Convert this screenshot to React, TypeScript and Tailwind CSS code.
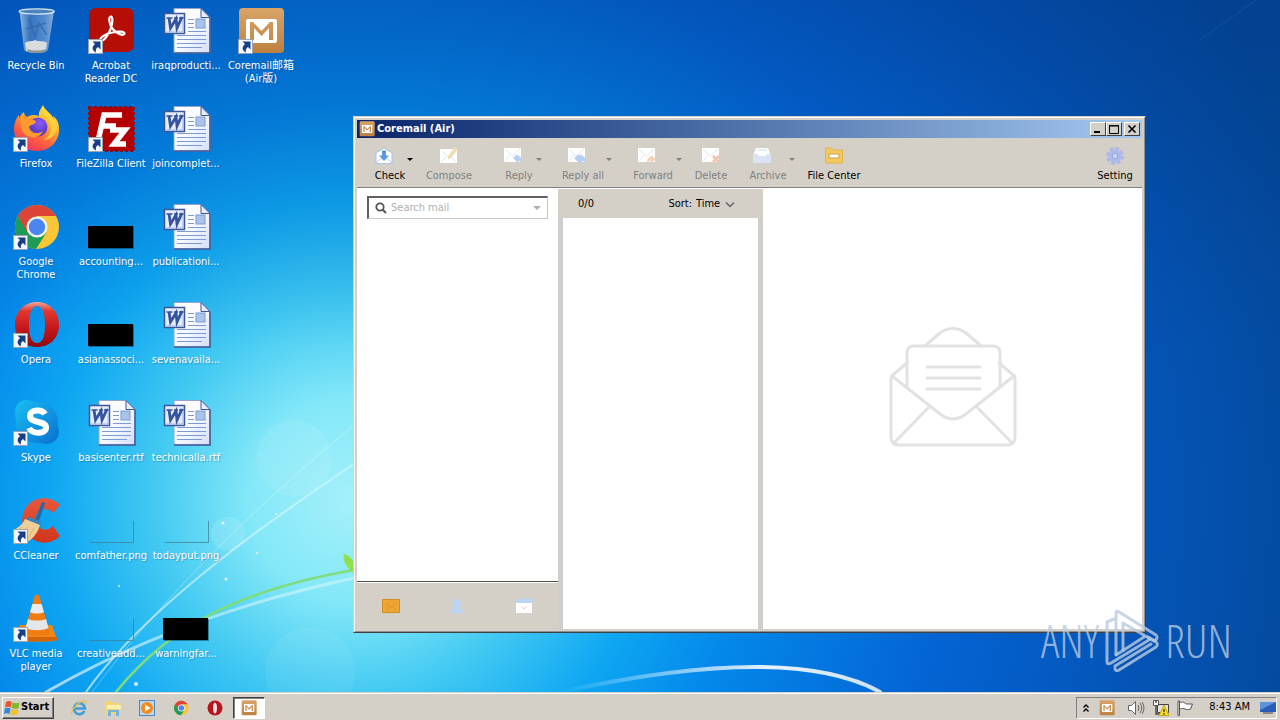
import React from 'react';

type IconType = React.FC<{ className?: string }>;

interface DesktopItem {
  label: string;
  icon: IconType;
  shortcut?: boolean;
}

interface ToolItem {
  label: string;
  icon: IconType;
  width: string;
  row?: string;
  menu?: boolean;
  active?: boolean;
}

/* ---------- Desktop icons (48 x 48) ---------- */

const RecycleBin: IconType = () => (
  <svg viewBox="0 0 48 48" className="size-12">
    <defs>
      <linearGradient id="bin" x1="0" x2="1">
        <stop offset="0" stopColor="#a9c6e6" />
        <stop offset=".3" stopColor="#3f78bd" />
        <stop offset=".7" stopColor="#5b92d2" />
        <stop offset="1" stopColor="#9cb9dc" />
      </linearGradient>
    </defs>
    <path d="M7.500 4 12 43c1 3 22 3 24 0l6-39z" fill="url(#bin)" opacity=".85" />
    <path d="M13 36c4-3 7-1 10-3 3 2 8 0 12 3l-1 8c-6 2.500-16 2.500-20 0z" fill="#d9dcdd" />
    <path d="M15 42c5 2 14 2 19 0v3c-5 1.500-14 1.500-18 0z" fill="#8d9296" />
    <path d="M17 12l6 18 4-14 8 12M14 22l20-6" stroke="#2c5f9f" strokeWidth="1.500" fill="none" opacity=".6" />
    <ellipse cx="24.700" cy="4.500" rx="17.500" ry="2.600" fill="#4d83bd" stroke="#d7e6f3" strokeWidth="1.400" />
  </svg>
);

const Acrobat: IconType = () => (
  <svg viewBox="0 0 48 48" className="size-12">
    <rect x="2" y="1" width="45" height="44" rx="7" fill="#b50f05" />
    <path
      d="M14 33.500c-3-2 4-6.500 11-8 7-1.700 13-1 12.500 1.200-1 2.500-7.500.300-12-5-3-4-4.500-11-2-12 2.500-.5 2.500 6 0 12.500-2.500 6-6.500 12-9.500 11.300z"
      fill="none"
      stroke="#fff"
      strokeWidth="2.200"
    />
  </svg>
);

const Firefox: IconType = () => (
  <svg viewBox="0 0 48 48" className="size-12">
    <defs>
      <linearGradient id="fox" x1=".85" y1="0" x2=".3" y2="1">
        <stop offset="0" stopColor="#fff04a" />
        <stop offset=".35" stopColor="#ffb92c" />
        <stop offset=".65" stopColor="#ff6a3a" />
        <stop offset="1" stopColor="#f2315f" />
      </linearGradient>
      <radialGradient id="foxGlobe" cx=".6" cy=".3">
        <stop offset="0" stopColor="#9059ff" />
        <stop offset="1" stopColor="#5b3fc4" />
      </radialGradient>
    </defs>
    <path
      d="M31 0c-2 4-5 7-4 11-5-2-9-1-12 1-2-1-3-3-3-5-3 2-4 4-4 6-1-1-1-2-1-3-4 5-5 10-5 14C2 37 12 46 25 46s23-10 22-23c0-6-3-10-6-12l1 4C40 8 33 6 31 0z"
      fill="url(#fox)"
    />
    <circle cx="26" cy="22" r="9.500" fill="url(#foxGlobe)" />
    <path d="M8 11c6-1 10 3 16 5 0 4-5 3-7 6 1 6 9 8 14 4-3 8-17 9-21-1-2-5-1-8-2-14z" fill="#ff9a30" />
    <path d="M30 4c1 6 10 10 9 19 0 7-4 10-8 12 8 0 14-6 14-14C44 13 36 9 30 4z" fill="#ffd43e" opacity=".8" />
  </svg>
);

const FileZilla: IconType = () => (
  <svg viewBox="0 0 48 48" className="size-12">
    <rect x="2" y="2" width="45" height="44" fill="#b30000" stroke="#8a0f18" strokeWidth="2" strokeDasharray="3 2" />
    <g fill="none" stroke="#fff" strokeWidth="5.500">
      <path d="M35 10H17L11 36M15 21h14" />
      <path d="M23 25h15L27 39h12" />
    </g>
  </svg>
);

const Chrome: IconType = ({ className = 'size-12' }) => (
  <svg viewBox="0 0 48 48" className={className}>
    <circle cx="25" cy="24" r="22" fill="#fbc634" />
    <path d="M25 13h19a22 22 0 0 0-38.100 0L15 30z" fill="#db4437" />
    <path d="M5.900 13A22 22 0 0 0 24 46l10.500-16.500L25 34l-9.500-4.500z" fill="#1e9c57" />
    <circle cx="25" cy="24" r="10.500" fill="#f4f4f4" />
    <circle cx="25" cy="24" r="8.200" fill="#4a86ee" />
  </svg>
);

const Opera: IconType = () => (
  <svg viewBox="0 0 48 48" className="size-12">
    <defs>
      <linearGradient id="opera" x1="0" x2="0" y1="0" y2="1">
        <stop offset="0" stopColor="#f2a59a" />
        <stop offset=".2" stopColor="#e2362f" />
        <stop offset=".6" stopColor="#c4171b" />
        <stop offset="1" stopColor="#8c0b10" />
      </linearGradient>
    </defs>
    <path
      fillRule="evenodd"
      d="M25 1C12 1 3 11 3 24s9 22 22 22 22-9 22-22S38 1 25 1zm0 4c6 0 8 9 8 19s-2 18-8 18-8-8-8-18 2-19 8-19z"
      fill="url(#opera)"
    />
  </svg>
);

const OperaSmall: IconType = () => (
  <svg viewBox="0 0 16 16" className="size-4">
    <circle cx="8" cy="8" r="7.500" fill="#b8151c" />
    <ellipse cx="8" cy="8" rx="2" ry="5.500" fill="#f6e4e4" />
  </svg>
);

const Skype: IconType = () => (
  <svg viewBox="0 0 48 48" className="size-12">
    <defs>
      <linearGradient id="skype" x1="0" y1="0" x2="1" y2="1">
        <stop offset="0" stopColor="#17c0f2" />
        <stop offset="1" stopColor="#0a6fd0" />
      </linearGradient>
    </defs>
    <path d="M14 1c5 0 6 2 11 2 13 0 21 9 21 21 0 4 1 6 1 9 0 8-7 12-13 12-3 0-5-1-8-1C12 44 4 35 4 24c0-4-1-5-1-10C3 6 8 1 14 1z" fill="url(#skype)" />
    <path d="M33 15c-3-5-15-5-15 2 0 8 16 4 16 11.500 0 7.500-14 6.500-17 .5" fill="none" stroke="#fff" strokeWidth="6" />
  </svg>
);

const CCleaner: IconType = () => (
  <svg viewBox="0 0 48 48" className="size-12">
    <defs>
      <linearGradient id="ccl" x1="0" y1="0" x2="0" y2="1">
        <stop offset="0" stopColor="#e8583a" />
        <stop offset="1" stopColor="#d0351d" />
      </linearGradient>
    </defs>
    <path d="M48 8C40-1 24-1 16 8c-9 10-7 26 3 33 9 7 21 6 29-2l-7-10c-5 5-12 5-16-1-3-5-2-11 3-14 5-3 10-2 13 2z" fill="url(#ccl)" />
    <path d="M30 5l3 1-6 18-4-1z" fill="#1f6cac" />
    <path d="M16 20l13 4-1 6-15-6z" fill="#3384bd" />
    <path d="M13 22l15 6c-2 7-7 14-13 17C9 43 4 38 1 33c5-2 10-6 12-11z" fill="#f0cf96" />
    <path d="M10 30l-5 5M16 30l-6 10M22 31l-7 12" stroke="#dcb478" strokeWidth="1" />
  </svg>
);

const Vlc: IconType = () => (
  <svg viewBox="0 0 48 48" className="size-12">
    <path d="M8 30h32l5 15c0 2-40 2-41 0z" fill="#f08713" />
    <path d="M5 42h40v3c-4 2-36 2-40 0z" fill="#d2650a" />
    <path d="M23 0h4l11 38c-5 4-21 4-26 0z" fill="#f07c12" />
    <path d="M20.500 9h9l2.500 8c-4 2-10 2-14 0z" fill="#e9ecef" />
    <path d="M16 24c5 2 13 2 18 0l2.500 9c-6 3-17 3-23 0z" fill="#e3e7ea" />
  </svg>
);

const WordDoc: IconType = () => (
  <svg viewBox="0 0 48 48" className="size-12 overflow-visible">
    <defs>
      <linearGradient id="page" x1="0" y1="0" x2="1" y2="1">
        <stop offset="0" stopColor="#ffffff" />
        <stop offset=".5" stopColor="#f8faff" />
        <stop offset="1" stopColor="#d3def8" />
      </linearGradient>
    </defs>
    <path d="M12 1.500h27l9 9V46H12z" fill="url(#page)" stroke="#8fa3d4" />
    <path d="M48 11v35H12" fill="none" stroke="#3f5795" strokeWidth="1.500" />
    <path d="M39 1.500v9h9z" fill="#e6edfc" stroke="#3f5795" />
    <path d="M26 12.500h6M26 16.500h6M26 20.500h6M26 24.500h18M15 28.500h29M15 32.500h29M15 36.500h29M15 40.500h25" stroke="#7c9ad4" />
    <rect x="34" y="12" width="9" height="9" fill="#aac3ea" stroke="#7d9bd2" />
    <rect x="2.500" y="6.500" width="20" height="20" fill="#e6eefb" stroke="#3c569b" strokeWidth="1.500" />
    <path d="M4 25h17V9" fill="none" stroke="#9fb5e0" />
    <path d="M7 11l1.500 10L14 12l1 9 5-11" fill="none" stroke="#35539f" strokeWidth="2.800" />
    <path d="M4.500 11h6M12 11h4M17 11h4.500" stroke="#35539f" strokeWidth="1.500" />
  </svg>
);

const BlackThumb: IconType = () => (
  <svg viewBox="0 0 48 48" className="size-12">
    <rect x="2" y="24" width="45" height="22" fill="#000" opacity=".35" />
    <rect x="1" y="23" width="45" height="22" fill="#000" />
  </svg>
);

const ClearThumb: IconType = () => (
  <svg viewBox="0 0 48 48" className="size-12">
    <path d="M3 45.500h43.500V24" fill="none" stroke="#3f7f93" opacity=".75" />
  </svg>
);

const Coremail: IconType = ({ className = 'size-12' }) => (
  <svg viewBox="0 0 48 48" className={className}>
    <defs>
      <linearGradient id="cm" x1="0" y1="0" x2="0" y2="1">
        <stop offset="0" stopColor="#d9a468" />
        <stop offset="1" stopColor="#bd8140" />
      </linearGradient>
    </defs>
    <rect x="2" y="1" width="45" height="45" rx="4" fill="url(#cm)" />
    <path fillRule="evenodd" d="M11 12h27q2 0 2 2v20q0 2-2 2H11q-2 0-2-2V14q0-2 2-2zm2 21h4V21l7.500 8 7.500-8v12h4V15h-3l-8.500 9-8.500-9h-3z" fill="#fff" />
  </svg>
);

const ShortcutArrow = () => (
  <svg viewBox="0 0 15 15" className="absolute bottom-px left-px size-[15px]">
    <rect x=".5" y=".5" width="14" height="14" fill="#f6f8fb" stroke="#9aa4ae" />
    <path d="M4.500 2.500h8v8L10 8C8 9.300 7.500 11 8 13.500 4 11.500 3.500 8 7 5z" fill="#163f86" />
  </svg>
);

/* ---------- Toolbar icons (18 x 18) ---------- */

const Check: IconType = () => (
  <svg viewBox="0 0 18 18" className="size-[18px]">
    <path d="M1 6l8-5 8 5v10.500H1z" fill="#fff" stroke="#a9c4ea" />
    <path d="M1 16l6-5M17 16l-6-5" stroke="#b5cdec" />
    <path d="M7 3.500h4v5h3l-5 5.500-5-5.500h3z" fill="#5f97de" />
  </svg>
);

const Compose: IconType = () => (
  <svg viewBox="0 0 18 18" className="size-[18px]">
    <path d="M0 2h17v14H0z" fill="#fff" />
    <path d="M2 4l6 6 5-4M1 15l5-5M16 15l-4-5" fill="none" stroke="#dfe4e8" />
    <path d="M8 9l7-9 3 2-7 9-3 1z" fill="#f0dcb0" />
  </svg>
);

const MailBase: React.FC<{ children: React.ReactNode }> = ({ children }) => (
  <svg viewBox="0 0 18 18" className="size-[18px]">
    <path d="M0 1h17v14H0z" fill="#fff" />
    <path d="M1 2l7.500 7L16 2M1 14l5-6M16 14l-5-6" fill="none" stroke="#e0e6ee" />
    {children}
  </svg>
);

const Reply: IconType = () => (
  <MailBase>
    <path d="M9 11l5-4v2c3 0 4 3 4 8-1-2-2-3-4-3v2z" fill="#b5cff2" />
  </MailBase>
);

const ReplyAll: IconType = () => (
  <MailBase>
    <path d="M6 11l5-4v2l3-2v2c3 0 4 3 4 8-1-2-2-3-4-3v3l-3-2v1z" fill="#b5cff2" />
  </MailBase>
);

const Forward: IconType = () => (
  <MailBase>
    <path d="M18 12l-5-4v2c-3 0-4 2-4 6 1-1 2-2 4-2v2z" fill="#f5d3b0" />
  </MailBase>
);

const Delete: IconType = () => (
  <MailBase>
    <path d="M11 9l6 6M17 9l-6 6" stroke="#f3c2ae" strokeWidth="2.500" />
  </MailBase>
);

const Archive: IconType = () => (
  <svg viewBox="0 0 18 18" className="size-[18px]">
    <path d="M3 1h12l3 7v8H0V8z" fill="#dbe2f3" />
    <path d="M3 1h12l2 6h-4v2H5V7H1z" fill="#fff" />
    <path d="M4 3h10" stroke="#cdd8ef" />
  </svg>
);

const FileCenter: IconType = () => (
  <svg viewBox="0 0 18 18" className="size-[18px]">
    <path d="M.5 1h6l2 2h9v13H.5z" fill="#f1cb62" stroke="#e3b444" />
    <rect x="4" y="7" width="10" height="4" fill="#fff" stroke="#d99e36" />
  </svg>
);

const Setting: IconType = () => (
  <svg viewBox="0 0 18 18" className="size-[18px]">
    <circle cx="9" cy="9" r="6.500" fill="#aebbea" />
    <circle cx="9" cy="9" r="7.500" fill="none" stroke="#aab8ea" strokeWidth="3" strokeDasharray="3.900 2" />
    <circle cx="9" cy="9" r="2.800" fill="#c9d3f0" stroke="#8ea5e2" />
  </svg>
);

const SmallArrow = () => (
  <svg viewBox="0 0 6 3" className="mb-1 h-[3px] w-1.5 self-end">
    <path d="M0 0h6L3 3z" fill="currentColor" />
  </svg>
);

const desktopItems: DesktopItem[] = [
  { label: 'Recycle Bin', icon: RecycleBin },
  { label: 'Firefox', icon: Firefox, shortcut: true },
  { label: 'Google Chrome', icon: Chrome, shortcut: true },
  { label: 'Opera', icon: Opera, shortcut: true },
  { label: 'Skype', icon: Skype, shortcut: true },
  { label: 'CCleaner', icon: CCleaner, shortcut: true },
  { label: 'VLC media player', icon: Vlc, shortcut: true },
  { label: 'Acrobat Reader DC', icon: Acrobat, shortcut: true },
  { label: 'FileZilla Client', icon: FileZilla, shortcut: true },
  { label: 'accounting...', icon: BlackThumb },
  { label: 'asianassoci...', icon: BlackThumb },
  { label: 'basisenter.rtf', icon: WordDoc },
  { label: 'comfather.png', icon: ClearThumb },
  { label: 'creativeadd...', icon: ClearThumb },
  { label: 'iraqproducti...', icon: WordDoc },
  { label: 'joincomplet...', icon: WordDoc },
  { label: 'publicationi...', icon: WordDoc },
  { label: 'sevenavaila...', icon: WordDoc },
  { label: 'technicalla.rtf', icon: WordDoc },
  { label: 'todayput.png', icon: ClearThumb },
  { label: 'warningfar...', icon: BlackThumb },
  { label: 'Coremail邮箱 (Air版)', icon: Coremail, shortcut: true }
];

const tools: ToolItem[] = [
  { label: 'Check', icon: Check, width: 'w-[46px]', row: 'w-[46px] pl-2', menu: true, active: true },
  { label: 'Compose', icon: Compose, width: 'w-12 mr-[11px]' },
  { label: 'Reply', icon: Reply, width: 'w-[46px]', row: 'w-[46px] pl-2', menu: true },
  { label: 'Reply all', icon: ReplyAll, width: 'w-[58px]', row: 'w-[58px] pl-3.5', menu: true },
  { label: 'Forward', icon: Forward, width: 'w-[58px]', row: 'w-[58px] pl-3.5', menu: true },
  { label: 'Delete', icon: Delete, width: 'w-[34px]' },
  { label: 'Archive', icon: Archive, width: 'w-14', row: 'w-[54px] pl-3', menu: true },
  { label: 'File Center', icon: FileCenter, width: 'w-[52px]', active: true }
];

const Wallpaper = () => (
  <svg viewBox="0 0 1280 692" preserveAspectRatio="none" className="absolute inset-0 size-full" aria-hidden="true">
    <defs>
      <radialGradient id="glow" gradientUnits="userSpaceOnUse" cx="350" cy="500" r="1000">
        <stop offset="0" stopColor="#a4f0fa" />
        <stop offset=".1" stopColor="#84e8f8" />
        <stop offset=".2" stopColor="#40c8f2" />
        <stop offset=".3" stopColor="#0ea6f2" />
        <stop offset=".4" stopColor="#0488ea" />
        <stop offset=".6" stopColor="#0464d4" />
        <stop offset=".8" stopColor="#0454b6" />
        <stop offset="1" stopColor="#044898" />
      </radialGradient>
      <linearGradient id="shade" x1="0" x2="0" y1="0" y2="1">
        <stop offset="0" stopColor="#003080" stopOpacity=".3" />
        <stop offset=".5" stopColor="#003a80" stopOpacity="0" />
      </linearGradient>
      <linearGradient id="beam" x1="0" x2="1" y1="1" y2="0">
        <stop offset="0" stopColor="#fff" stopOpacity=".9" />
        <stop offset="1" stopColor="#fff" stopOpacity=".5" />
      </linearGradient>
      <linearGradient id="arc" x1="0" x2="1">
        <stop offset="0" stopColor="#fff" stopOpacity="0" />
        <stop offset=".65" stopColor="#fff" stopOpacity=".9" />
        <stop offset="1" stopColor="#fff" stopOpacity=".8" />
      </linearGradient>
    </defs>
    <rect width="1280" height="692" fill="url(#glow)" />
    <rect width="1280" height="692" fill="url(#shade)" />
    <circle cx="294" cy="458" r="38" fill="#fff" opacity=".08" />
    <circle cx="228" cy="534" r="17" fill="#fff" opacity=".12" />
    <circle cx="310" cy="672" r="45" fill="#fff" opacity=".06" />
    <g fill="none" strokeLinecap="round">
      <path d="M46 692Q180 615 354 578" stroke="url(#beam)" strokeWidth="3" opacity=".7" />
      <path d="M86 692C130 630 210 560 354 464" stroke="url(#beam)" strokeWidth="2" opacity=".7" />
      <path d="M92 692Q190 560 354 425" stroke="#fff" strokeWidth="1" opacity=".3" />
      <path d="M116 692C170 625 240 590 354 570" stroke="#7fdc7c" strokeWidth="2.500" />
      <path d="M354 574c-6-6-12-12-10-20 6 2 9 6 10 10z" fill="#8fe04c" />
      <path d="M560 692Q790 642 880 692" stroke="url(#arc)" strokeWidth="4" />
      <path d="M1200 40L1256 0" stroke="#4d8fd0" strokeWidth="1" opacity=".2" />
    </g>
    <g fill="#fff" opacity=".8">
      <circle cx="223" cy="523" r="1.500" />
      <circle cx="276" cy="514" r="1" />
      <circle cx="226" cy="579" r="1.500" />
      <circle cx="136" cy="684" r="2" />
      <circle cx="257" cy="553" r="1" />
      <circle cx="119" cy="586" r="1" />
    </g>
  </svg>
);

const winButton =
  'flex h-3.5 w-4 items-center justify-center border border-t-white border-l-white border-r-[#404040] border-b-[#404040] bg-[#d4d0c8]';

const ToolButton: React.FC<{ item: ToolItem }> = ({ item }) => {
  const Icon = item.icon;
  return (
    <button
      type="button"
      className={`flex flex-col items-center whitespace-nowrap ${item.width} ${item.active ? 'text-black' : 'text-[#808080]'}`}
    >
      <span className={item.row ? `flex justify-between ${item.row}` : 'flex'}>
        <Icon />
        {item.menu && <SmallArrow />}
      </span>
      <span className="mt-1 leading-[13px]">{item.label}</span>
    </button>
  );
};

const MailWindow = () => (
  <section className="absolute top-[116px] right-[134px] bottom-[59px] left-[353px] flex flex-col border border-[#d4d0c8] border-r-[#404040] border-b-[#404040] bg-[#d4d0c8] text-[11px]">
    <div className="flex min-h-0 grow flex-col border border-t-white border-r-[#909090] border-b-[#909090] border-l-white p-0.5">
      <header className="flex h-[18px] shrink-0 items-center bg-linear-to-r from-[#0a246a] to-[#a6caf0] px-0.5">
        <Coremail className="size-4" />
        <h1 className="ml-0.5 grow text-[11px] font-bold text-white">Coremail (Air)</h1>
        <button type="button" aria-label="Minimize" className={winButton}>
          <svg viewBox="0 0 12 10" className="h-2.5 w-3"><path d="M2 7h6v2H2z" /></svg>
        </button>
        <button type="button" aria-label="Maximize" className={winButton}>
          <svg viewBox="0 0 12 10" className="h-2.5 w-3"><path d="M1.500 1.500h9v8h-9zM1 2h10" fill="none" stroke="#000" /></svg>
        </button>
        <button type="button" aria-label="Close" className={`ml-0.5 ${winButton}`}>
          <svg viewBox="0 0 12 10" className="h-2.5 w-3"><path d="M2.500 1.500l7 7M9.500 1.500l-7 7" stroke="#000" strokeWidth="1.600" /></svg>
        </button>
      </header>

      {/* Toolbar */}
      <div className="flex shrink-0 items-start gap-3 border-b border-[#808080] pt-[9px] pr-2 pb-[5px] pl-2.5">
        {tools.map((item) => (
          <ToolButton key={item.label} item={item} />
        ))}
        <div className="grow" />
        <ToolButton item={{ label: 'Setting', icon: Setting, width: 'w-[38px]', active: true }} />
      </div>

      <div className="flex min-h-0 grow border-t border-white">
        {/* Folders */}
        <aside className="flex w-[201px] shrink-0 flex-col bg-white">
          <div className="grow px-2.5 pt-[7px]">
            <div className="flex h-[23px] items-center border border-t-2 border-l-2 border-[#c8c8c8] border-t-[#606060] border-l-[#606060] px-1.5">
              <svg viewBox="0 0 12 12" className="size-3 shrink-0">
                <circle cx="5" cy="5" r="3.700" fill="none" stroke="#555" strokeWidth="1.800" />
                <path d="M7.500 7.500l3.500 3.500" stroke="#555" strokeWidth="2" />
              </svg>
              <input
                type="text"
                aria-label="Search mail"
                placeholder="Search mail"
                className="ml-1 min-w-0 grow bg-transparent outline-none placeholder:text-[#b0b0b0]"
              />
              <button type="button" aria-label="Search options">
                <svg viewBox="0 0 8 4" className="h-1 w-2"><path d="M0 0h8L4 4z" fill="#b0b0b0" /></svg>
              </button>
            </div>
          </div>
          <nav className="flex h-12 shrink-0 items-center justify-around border-t border-[#505050] bg-[#d4d0c8] shadow-[inset_0_1px_0_#fff]">
            <button type="button" aria-label="Mail">
              <svg viewBox="0 0 18 14" className="h-3.5 w-[18px]">
                <path d="M.5.5h17v13H.5z" fill="#eda634" stroke="#d28e22" />
                <path d="M4 4l5 4 5-4M4 11l3-3M14 11l-3-3" fill="none" stroke="#d8952a" />
              </svg>
            </button>
            <button type="button" aria-label="Contacts">
              <svg viewBox="0 0 16 16" className="size-4">
                <path d="M8 1c3 0 4 2 4 4.500 0 2-1 4-2 5 3 0 5 2 5 4.500H1c0-2.500 2-4.500 5-4.500-1-1-2-3-2-5C4 3 5 1 8 1z" fill="#bcd5f5" />
              </svg>
            </button>
            <button type="button" aria-label="Calendar">
              <svg viewBox="0 0 18 14" className="h-3.5 w-[18px]">
                <path d="M1 3h16v11H1z" fill="#fff" />
                <path d="M0 0h18v4H0z" fill="#bcd5f5" />
                <path d="M7 8l2 2 3-3" fill="none" stroke="#e6cfc8" />
              </svg>
            </button>
          </nav>
        </aside>

        {/* Message list */}
        <div className="flex w-[205px] shrink-0 flex-col bg-[#d0ceca]">
          <div className="flex h-[29px] items-center bg-[#d4d0c8] pt-0.5 pr-7 pl-5">
            <span className="grow">0/0</span>
            <label className="flex items-center gap-1">
              Sort:
              <select className="appearance-none bg-transparent outline-none" defaultValue="Time">
                <option>Time</option>
              </select>
              <svg viewBox="0 0 10 6" className="h-1.5 w-2.5">
                <path d="M1 .5l4 4 4-4" fill="none" stroke="#666" strokeWidth="1.500" />
              </svg>
            </label>
          </div>
          <div className="mx-[5px] grow bg-white" />
        </div>

        {/* Preview */}
        <main className="flex grow items-center justify-center bg-white">
          <svg viewBox="0 0 128 120" className="mb-11 h-[120px] w-32" fill="none" stroke="#e2e2e2" strokeWidth="3" strokeLinejoin="round" strokeLinecap="round">
            <path d="M37 18L51 6q13-9 26 0l14 12" />
            <path d="M18 60V26q0-7 7-7h79q7 0 7 7v34" />
            <path d="M18 36L5 47q-3 2-3 5v58q0 8 8 8h108q8 0 8-8V52q0-3-3-5l-13-11" />
            <path d="M3 49l48 38q13 10 26 0l48-38M40 80L6 115M88 80l34 35" />
            <path d="M38 40h53M38 51h53M38 62h53" />
          </svg>
        </main>
      </div>
    </div>
  </section>
);

const Watermark = () => (
  <div className="pointer-events-none absolute right-12 bottom-5 flex items-center font-['Open_Sans_Condensed_Light','Open_Sans_Condensed','Noto_Sans_ExtraCondensed','Roboto_Condensed','Liberation_Sans',sans-serif] text-[46px] leading-[64px] text-[#b9cbe0]/80">
    <span>ANY</span>
    <svg viewBox="0 0 58 64" className="mx-1 h-16 w-[58px]" fill="none" stroke="currentColor" strokeWidth="3" strokeLinejoin="round" strokeLinecap="round">
      <path d="M11 11l-7 3v40q0 3 4 1l38-23" />
      <path d="M13 46V5q0-3 3-1l37 23q3 3-2 6L20 15v27" />
      <path d="M13 47l28-18M12 60q0 4 4 2l37-23q3-3-1-6l-7-4M12 58l36-22" />
    </svg>
    <span>RUN</span>
  </div>
);

const Taskbar = () => (
  <footer className="flex h-7 shrink-0 items-center border-t border-[#d4d0c8] bg-[#d4d0c8] pr-[3px] pl-0.5 text-[11px] shadow-[inset_0_1px_0_#fff]">
    <button
      type="button"
      className="mt-0.5 flex h-[22px] w-[52px] items-center border border-t-white border-r-[#404040] border-b-[#404040] border-l-white pl-px font-bold shadow-[inset_-1px_-1px_0_#808080]"
    >
      <svg viewBox="0 0 16 16" className="mr-px size-4 shrink-0">
        <path d="M2 2c2-1.500 4-1 5.800 0L6.800 7.500C5 6.500 3 6.500 1 7.500z" fill="#e8562a" />
        <path d="M8.500 2.500c2 1 4.500 1 7 0l-1 5.500c-2 1-4.500 1-7 0z" fill="#7fba2c" />
        <path d="M.8 8.500c2-1 4-1 5.800 0L5.500 14C3.500 13 2 13 0 14z" fill="#3a86d8" />
        <path d="M7.300 9c2 1 4.500 1 7 0l-1 5.500c-2 1-4.500 1-7 0z" fill="#f4bf28" />
      </svg>
      Start
    </button>
    <div className="mt-0.5 ml-[17px] flex items-center gap-[18px]">
      <button type="button" aria-label="Internet Explorer">
        <svg viewBox="0 0 16 16" className="size-4" fill="none">
          <path d="M13.500 11A5.500 5.500 0 1 1 14 8.500H4.500" stroke="#3a9ee0" strokeWidth="2.600" />
          <path d="M1 14.500C-1 12 6 2 13 1c3-.400 2 3 1 4" stroke="#efc03c" strokeWidth="1.300" />
        </svg>
      </button>
      <button type="button" aria-label="Windows Explorer">
        <svg viewBox="0 0 16 16" className="size-4">
          <path d="M0 1h6l1 2h8v11H0z" fill="#f3d670" />
          <path d="M2 5h14v4H2z" fill="#fbeeb0" />
          <path d="M3 10h11v6h-3v-4H6v4H3z" fill="#74b4dc" />
        </svg>
      </button>
      <button type="button" aria-label="Windows Media Player">
        <svg viewBox="0 0 16 16" className="size-4">
          <rect x=".5" y=".5" width="15" height="15" fill="#b9d8f0" stroke="#4c88c0" />
          <circle cx="8" cy="8" r="6" fill="#f28a1c" />
          <path d="M6 4.500l5.500 3.500L6 11.500z" fill="#fff" />
        </svg>
      </button>
      <button type="button" aria-label="Google Chrome"><Chrome className="size-4" /></button>
      <button type="button" aria-label="Opera"><OperaSmall /></button>
    </div>
    <button
      type="button"
      aria-label="Coremail (Air)"
      className="mt-0.5 ml-2.5 flex h-[22px] w-8 items-center justify-center border border-t-[#404040] border-r-white border-b-white border-l-[#404040] bg-white shadow-[inset_1px_1px_0_#808080]"
    >
      <Coremail className="size-4" />
    </button>
    <div className="grow" />
    <div className="mt-0.5 flex h-[22px] items-center border border-t-[#808080] border-r-white border-b-white border-l-[#808080] pl-1.5">
      <button type="button" aria-label="Show hidden icons">
        <svg viewBox="0 0 6 8" className="h-2 w-1.5" fill="none" stroke="#000" strokeWidth="1.300">
          <path d="M.5 3.500L3 1l2.500 2.500M.5 7.500L3 5l2.500 2.500" />
        </svg>
      </button>
      <Coremail className="ml-2.5 size-4" />
      <svg viewBox="0 0 18 16" className="ml-3 h-4 w-[18px]" fill="none" stroke="#666">
        <path d="M1.500 5.500h3l4-4v13l-4-4h-3z" fill="#fff" />
        <path d="M11 5q2 3 0 6M13 3q3.500 5 0 10M15 2q4 6 0 12" />
      </svg>
      <svg viewBox="0 0 16 16" className="ml-2 size-4">
        <path d="M4.500 4.500h11v8h-11z" fill="#e4e4e4" stroke="#444" />
        <path d="M.5.5h5v5h-5z" fill="#fff" stroke="#555" />
        <path d="M3 1v2M3 5v9h4" fill="none" stroke="#444" strokeWidth="1.400" />
        <path d="M11 5l5 10.500H6z" fill="#f7dc28" stroke="#c7a60e" />
        <path d="M11 9v3M11 13v1.500" stroke="#000" />
      </svg>
      <svg viewBox="0 0 16 16" className="ml-2 size-4" fill="#fff" stroke="#555">
        <path d="M1 1h1.500v14.500H1zM3 2.500c4-1.500 5 1.500 7 1.500h5.500l-2 5c-5 2-6-2-10.500 0" />
      </svg>
      <time className="ml-4">8:43 AM</time>
      <svg viewBox="0 0 16 14" className="ml-2.5 h-3.5 w-4">
        <path d="M0 1h16v10H0z" fill="#2a5db8" />
        <path d="M0 1h16L0 9z" fill="#5d92dc" />
        <path d="M3 11h10v2H3z" fill="#888" />
      </svg>
    </div>
  </footer>
);

const App: React.FC = () => (
  <div className="flex min-h-screen flex-col font-['DejaVu_Sans_Condensed','Noto_Sans','Noto_Sans_CJK_SC',sans-serif] text-black">
    <div className="relative grow overflow-hidden">
      <Wallpaper />
      <ul className="relative -mb-3 grid w-max auto-cols-[72px] grid-flow-col grid-rows-[repeat(7,98px)] gap-x-[3px] pt-[7px]">
        {desktopItems.map(({ label, icon: Icon, shortcut }) => (
          <li key={label} className="flex flex-col items-center">
            <span className="relative">
              <Icon />
              {shortcut && <ShortcutArrow />}
            </span>
            <span className="mt-1 text-center text-[11px] leading-[13px] text-white [text-shadow:1px_1px_1px_#00306050]">
              {label}
            </span>
          </li>
        ))}
      </ul>
      <MailWindow />
      <Watermark />
    </div>
    <Taskbar />
  </div>
);

export default App;
